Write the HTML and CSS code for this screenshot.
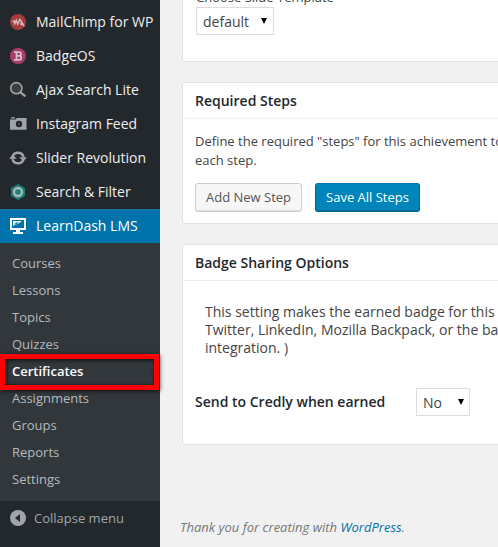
FILE: index.html
```
<!DOCTYPE html>
<html lang="en">
<head>
<meta charset="utf-8">
<title>Edit Achievement</title>
<link rel="stylesheet" href="styles.css">
</head>
<body>
<div class="admin">
  <nav class="sidebar">
    <ul class="menu">
      <li class="item"><svg class="icon" viewBox="0 0 20 20"><circle cx="10" cy="10" r="8" fill="#a33d3d"/><path d="M4.5 9.5 L6 9 L6.8 11.5 L8.3 8.3 L9.7 12 L11.8 7.5 L13 9 L15.3 13 L12 11.5" fill="none" stroke="#d0bab9" stroke-width="1.6"/></svg><span>MailChimp for WP</span></li>
      <li class="item"><svg class="icon" viewBox="0 0 20 20"><circle cx="10" cy="10" r="8" fill="#aa3b6b"/><path d="M6 6.2H11a2 1.8 0 0 1 0 3.6H8.6M11.3 9.8a2 2 0 0 1 0 4H6M8.5 6.2v7.6" fill="none" stroke="#d6c0ca" stroke-width="1.7"/></svg><span>BadgeOS</span></li>
      <li class="item"><svg class="icon" viewBox="0 0 20 20"><circle cx="8.3" cy="8.2" r="5.6" fill="#393e42" stroke="#a0a3a6" stroke-width="1.6"/><path d="M12.5 12.3 L17.4 16.4" stroke="#a0a3a6" stroke-width="2.2"/></svg><span>Ajax Search Lite</span></li>
      <li class="item"><svg class="icon" viewBox="0 0 20 20"><path d="M3 3.3h4V4.5H3zM2 5.5h5.5L9 4h9.5v11.7H2z" fill="#a0a5aa"/><circle cx="11" cy="10" r="3.2" fill="#23282d"/><circle cx="11" cy="10" r="1" fill="#53585c"/></svg><span>Instagram Feed</span></li>
      <li class="item"><svg class="icon" viewBox="0 0 20 20"><path d="M4.4 9A5.8 5.8 0 0 1 15.6 9M15.6 11A5.8 5.8 0 0 1 4.4 11" fill="none" stroke="#a0a5aa" stroke-width="2.5"/><path d="M1 10.7 L4.8 6.8 L8.8 10.7zM11.2 9.3H19L15.4 13.2z" fill="#a0a5aa"/></svg><span>Slider Revolution</span></li>
      <li class="item"><svg class="icon" viewBox="0 0 20 20"><path d="M10 2 L17 6v8l-7 4-7-4V6z" fill="#207b79"/><circle cx="10" cy="10" r="4" fill="none" stroke="#a9b8ba" stroke-width="2.4"/></svg><span>Search &amp; Filter</span></li>
      <li class="item active"><svg class="icon" viewBox="0 0 20 20"><path d="M2 2h16v12h-6v2h3v2H5v-2h3v-2H2z" fill="#fff"/><path d="M4 4h12v8H4z" fill="#0073aa"/><path d="M5 5h9L10.5 7.5 5 10z" fill="#fff"/><path d="M5.5 8.5 L8.5 6.5H11L8 8.5z" fill="#0073aa"/></svg><span>LearnDash LMS</span></li>
    </ul>
    <ul class="submenu">
      <li>Courses</li>
      <li>Lessons</li>
      <li>Topics</li>
      <li>Quizzes</li>
      <li class="current">Certificates<span class="marker"></span></li>
      <li>Assignments</li>
      <li>Groups</li>
      <li>Reports</li>
      <li>Settings</li>
    </ul>
    <div class="collapse"><svg class="icon" viewBox="0 0 20 20"><circle cx="10" cy="10" r="8" fill="#a0a5aa"/><path d="M12 6v8L7 10z" fill="#23282d"/></svg><span>Collapse menu</span></div>
  </nav>
  <main class="content">
    <section class="card card-template">
      <label class="field-label">Choose Slide Template</label>
      <div class="select wide"><span>default</span><i class="arrow"></i></div>
    </section>
    <section class="card card-steps">
      <h3>Required Steps</h3>
      <p class="description">Define the required "steps" for this achievement to<br>each step.</p>
      <div class="buttons"><button class="button">Add New Step</button><button class="button primary">Save All Steps</button></div>
    </section>
    <section class="card card-sharing">
      <h3>Badge Sharing Options</h3>
      <p class="note">This setting makes the earned badge for this<br>Twitter, LinkedIn, Mozilla Backpack, or the ba<br>integration. )</p>
      <div class="row"><span class="row-label">Send to Credly when earned</span><div class="select small"><span>No</span><i class="arrow"></i></div></div>
    </section>
    <footer>Thank you for creating with <a>WordPress</a>.</footer>
  </main>
</div>
</body>
</html>
```
FILE: styles.css
```
* { box-sizing: border-box; }
body { margin: 0; overflow: hidden; background: #f1f1f1; font: 13px/18px "Open Sans", sans-serif; color: #444; }
ul { list-style: none; margin: 0; padding: 0; }
.admin { display: flex; height: 547px; overflow: hidden; }
.sidebar { flex: 0 0 160px; background: #23282d; }
.menu { padding-top: 5px; }
.item { display: flex; align-items: center; height: 34px; padding-left: 8px; font-size: 14px; color: #eee; white-space: nowrap; }
.item.active { background: #0073aa; color: #fff; }
.icon { flex: none; width: 20px; height: 20px; margin-right: 8px; }
.submenu { height: 258px; padding-top: 7px; background: #32373c; color: #b4b9be; }
.submenu li { position: relative; height: 27px; padding-left: 12px; line-height: 27px; }
.submenu .current { color: #fff; font-weight: 600; }
.marker { position: absolute; z-index: 1; left: 0; top: -4px; width: 159px; height: 36px; border: 5px solid #f00; box-shadow: 1px 1px 4px #000b, inset 1px 1px 4px #000b; }
.collapse { display: flex; align-items: center; height: 34px; padding-left: 8px; color: #a0a5aa; }
.collapse .icon { margin-right: 6px; }
.content { flex: none; width: 560px; padding-left: 22px; }
.card { background: #fff; border: 1px solid #e1e1e1; border-radius: 3px; margin-bottom: 20px; white-space: nowrap; }
.card-template { height: 82px; margin-top: -20px; padding: 3px 13px 0; }
.field-label { display: block; height: 23px; line-height: 27px; }
.select { display: flex; align-items: center; justify-content: space-between; height: 28px; padding: 2px 6px 0; border: 1px solid #ddd; background: #fff; font-size: 14px; }
.wide { width: 78px; }
.small { width: 54px; padding-right: 5px; }
.arrow { border: 3px solid transparent; border-top: 6px solid #000; border-bottom: 0; margin-top: -2px; }
.card-steps { height: 142px; }
.card-sharing { height: 201px; }
h3 { height: 36px; margin: 0; padding-left: 12px; border-bottom: 1px solid #eee; color: #23282d; font-size: 14px; font-weight: 600; line-height: 36px; }
.description { margin: 13px 12px 0; line-height: 19px; }
.buttons { display: flex; gap: 13px; padding: 13px 12px 0; }
.button { width: 107px; height: 29px; padding: 0 0 1px; border: 1px solid #ccc; border-radius: 3px; background: #f7f7f7; box-shadow: inset 0 -1px #ddd; color: #555; font: 13px/26px "Open Sans", sans-serif; }
.primary { width: 105px; border-color: #0073aa #006799 #006799; background: #0085ba; box-shadow: inset 0 -1px #006799; color: #fff; }
.note { margin: 22px 22px 0; font-size: 14px; line-height: 18px; }
.row { display: flex; align-items: center; margin-top: 31px; padding-left: 12px; }
.row-label { width: 221px; color: #23282d; font-size: 14px; font-weight: 600; }
footer { margin: 73px 0 0 -2px; color: #777; font-style: italic; }
footer a { color: #0073aa; }
```
